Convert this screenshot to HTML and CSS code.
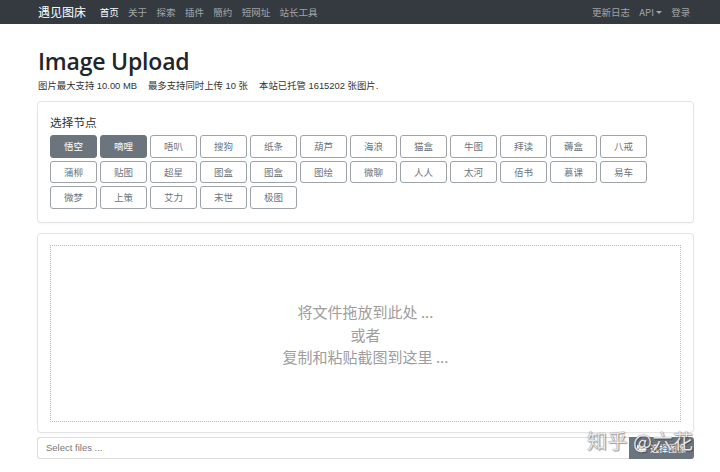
FILE: index.html
```html
<!DOCTYPE html>
<html lang="zh">
<head>
<meta charset="utf-8">
<title>遇见图床</title>
<link rel="stylesheet" href="styles.css">
</head>
<body>
<nav class="navbar">
  <div class="nav-inner">
    <div class="nav-left">
      <span class="brand">遇见图床</span>
      <a class="nav-link active">首页</a>
      <a class="nav-link">关于</a>
      <a class="nav-link">探索</a>
      <a class="nav-link">插件</a>
      <a class="nav-link">簡约</a>
      <a class="nav-link">短网址</a>
      <a class="nav-link">站长工具</a>
    </div>
    <div class="nav-right">
      <a class="nav-link">更新日志</a>
      <a class="nav-link">API<span class="caret"></span></a>
      <a class="nav-link">登录</a>
    </div>
  </div>
</nav>
<main class="container">
  <h1 class="title">Image Upload</h1>
  <p class="subtitle"><span>图片最大支持 10.00 MB</span><span>最多支持同时上传 10 张</span><span>本站已托管 1615202 张图片.</span></p>
  <section class="card nodes">
    <div class="nodes-title">选择节点</div>
    <div class="btn-grid">
      <button class="node active">悟空</button>
      <button class="node active">嘀哩</button>
      <button class="node">唔叭</button>
      <button class="node">搜狗</button>
      <button class="node">纸条</button>
      <button class="node">葫芦</button>
      <button class="node">海浪</button>
      <button class="node">猫盒</button>
      <button class="node">牛图</button>
      <button class="node">拜读</button>
      <button class="node">薅盒</button>
      <button class="node">八戒</button>
      <button class="node">蒲柳</button>
      <button class="node">贴图</button>
      <button class="node">超星</button>
      <button class="node">图盒</button>
      <button class="node">图盒</button>
      <button class="node">图绘</button>
      <button class="node">微聊</button>
      <button class="node">人人</button>
      <button class="node">太河</button>
      <button class="node">佰书</button>
      <button class="node">慕课</button>
      <button class="node">易车</button>
      <button class="node">微梦</button>
      <button class="node">上策</button>
      <button class="node">艾力</button>
      <button class="node">末世</button>
      <button class="node">极图</button>
    </div>
  </section>
  <section class="card drop-card">
    <div class="dropzone">
      <div>将文件拖放到此处 ...</div>
      <div>或者</div>
      <div>复制和粘贴截图到这里 ...</div>
    </div>
  </section>
  <div class="file-row">
    <div class="file-input">Select files ...</div>
    <button class="file-btn"><svg class="folder" width="10" height="8" viewBox="0 0 10 8"><path d="M0 1h3.5l1 1H8v1.5H2.2L0 7z" fill="#fff"/><path d="M2.6 3.9H10L8 7.6H0.6z" fill="#fff"/></svg>选择图像</button>
  </div>
</main>
<div class="watermark">知乎 @六花</div>
</body>
</html>
```
FILE: styles.css
```css
* { box-sizing: border-box; }
body {
  margin: 0;
  font-family: "Liberation Sans", "Noto Sans CJK SC", sans-serif;
  color: #212529;
  background: #fff;
}
.navbar {
  height: 24px;
  background: #343a40;
  display: flex;
  align-items: center;
}
.nav-inner {
  width: 658px;
  margin-left: 37px;
  display: flex;
  justify-content: space-between;
  align-items: center;
  font-family: "Noto Sans CJK SC", "Liberation Sans", sans-serif;
}
.nav-left, .nav-right { display: flex; align-items: center; }
.brand {
  color: #fff;
  font-size: 12px;
  line-height: 16px;
  margin-left: 1px;
  margin-right: 9px;
}
.nav-link {
  color: rgba(255,255,255,.55);
  font-size: 9.5px;
  line-height: 14px;
  padding: 0 4.7px;
  display: flex;
  align-items: center;
}
.nav-link.active { color: #fff; }
.caret {
  display: inline-block;
  margin-left: 2px;
  border-top: 3px solid rgba(255,255,255,.55);
  border-left: 3px solid transparent;
  border-right: 3px solid transparent;
}
.container {
  width: 657px;
  margin-left: 37px;
}
.title {
  margin: 22.5px 0 0 1px;
  font-family: "Open Sans", "Liberation Sans", sans-serif;
  font-size: 23px;
  line-height: 28px;
  font-weight: 600;
  letter-spacing: -0.2px;
  color: #212529;
}
.subtitle {
  margin: 4px 0 8.5px 1px;
  font-size: 9.4px;
  line-height: 14px;
  color: #333;
}
.subtitle span { margin-right: 11px; }
.card {
  border: 1px solid #e4e4e4;
  border-radius: 4px;
  box-shadow: 0 1px 2px rgba(0,0,0,.04);
  background: #fff;
}
.nodes {
  padding: 12px 12px 13.5px;
  margin-bottom: 10px;
}
.nodes-title {
  font-family: "Noto Sans CJK SC", sans-serif;
  font-size: 11.7px;
  line-height: 16px;
  color: #333;
  margin-bottom: 5px;
}
.btn-grid {
  display: flex;
  flex-wrap: wrap;
  gap: 3px;
  width: 600px;
}
.node {
  width: 47px;
  height: 22.5px;
  padding: 0;
  margin: 0;
  border: 1px solid #9ea3a8;
  border-radius: 3px;
  background: #fff;
  color: #6c757d;
  font-family: "Noto Sans CJK SC", sans-serif;
  font-size: 9.5px;
}
.node.active {
  background: #6c757d;
  border-color: #6c757d;
  color: #fff;
}
.drop-card {
  padding: 11px 12px 10px;
}
.dropzone {
  height: 177px;
  border: 1px dotted #b9b9b9;
  display: flex;
  flex-direction: column;
  justify-content: center;
  align-items: center;
  font-family: "Noto Sans CJK SC", sans-serif;
  font-size: 15px;
  line-height: 22.5px;
  color: #9e9e9e;
  padding-top: 3px;
}
.file-row {
  margin-top: 4px;
  height: 22px;
  display: flex;
}
.file-input {
  flex: 1;
  border: 1px solid #dcdcdc;
  border-right: none;
  border-radius: 3px 0 0 3px;
  font-size: 9.5px;
  line-height: 20px;
  padding-left: 8px;
  color: #777;
}
.file-btn {
  width: 65px;
  border: none;
  border-radius: 0 3px 3px 0;
  background: #6c757d;
  color: #fff;
  font-family: "Noto Sans CJK SC", sans-serif;
  font-size: 9px;
  display: flex;
  align-items: center;
  justify-content: center;
  padding: 0;
}
.folder { margin-right: 3px; }
.watermark {
  position: absolute;
  left: 587px;
  top: 428px;
  font-family: "Noto Sans CJK SC", sans-serif;
  font-size: 20px;
  line-height: 26px;
  color: rgba(255,255,255,.85);
  text-shadow: 0 0 1px #555, 1px 1px 1px rgba(0,0,0,.35);
  letter-spacing: 0.5px;
}
```
